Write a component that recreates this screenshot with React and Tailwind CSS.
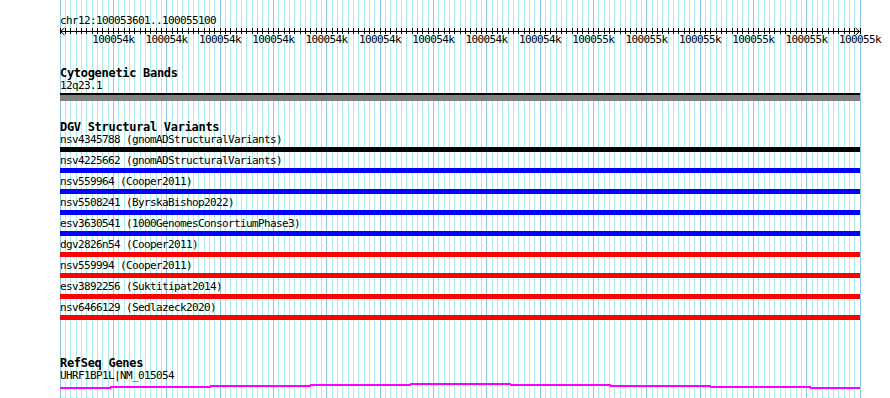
import React from "react";

const MONO = "font-['DejaVu_Sans_Mono',monospace]";

const variants = [
  ["nsv4345788 (gnomADStructuralVariants)", "bg-black"],
  ["nsv4225662 (gnomADStructuralVariants)", "bg-[#0000ff]"],
  ["nsv559964 (Cooper2011)", "bg-[#0000ff]"],
  ["nsv5508241 (ByrskaBishop2022)", "bg-[#0000ff]"],
  ["esv3630541 (1000GenomesConsortiumPhase3)", "bg-[#0000ff]"],
  ["dgv2826n54 (Cooper2011)", "bg-[#ff0000]"],
  ["nsv559994 (Cooper2011)", "bg-[#ff0000]"],
  ["esv3892256 (Suktitipat2014)", "bg-[#ff0000]"],
  ["nsv6466129 (Sedlazeck2020)", "bg-[#ff0000]"],
];

const STEP = 800 / 150;
const ks = Array.from({ length: 151 }, (_, k) => k);

function Grid() {
  return (
    <svg className="absolute left-0 top-0" width="890" height="398">
      {ks.map((k) => {
        const x = Math.round(59.67 + k * STEP) + 0.5;
        const major = k % 10 === 0;
        return (
          <line
            key={k}
            x1={x}
            x2={x}
            y1="0"
            y2="398"
            stroke={major ? "#8ec6ea" : "#afeeee"}
            strokeWidth="1"
          />
        );
      })}
    </svg>
  );
}

function Ruler() {
  return (
    <svg width="802" height="7" className="block overflow-visible">
      <line x1="0" x2="800" y1="4.5" y2="4.5" stroke="#000" strokeWidth="1" />
      {ks.map((k) => {
        const x = Math.round(-0.33 + k * STEP) + 0.5;
        return <line key={k} x1={x} x2={x} y1="1" y2="7" stroke="#000" strokeWidth="1" />;
      })}
      <polyline points="4.5,1 0.5,4.5 4.5,8" fill="none" stroke="#000" strokeWidth="1" />
      <polyline points="795.5,1 799.5,4.5 795.5,8" fill="none" stroke="#000" strokeWidth="1" />
    </svg>
  );
}

function RulerLabels() {
  const labels = ks.filter((k) => k % 10 === 0 && k > 0);
  return (
    <div className="relative h-[12px]">
      {labels.map((k) => {
        const x = -0.33 + k * STEP;
        const txt = k <= 90 ? "100054k" : "100055k";
        return (
          <span
            key={k}
            className="absolute top-0 -translate-x-1/2 text-[11px] leading-[12px] tracking-[-0.62px] text-black whitespace-nowrap"
            style={{ left: x + 0.3 }}
          >
            {txt}
          </span>
        );
      })}
    </div>
  );
}

function GeneLine() {
  const segs = [
    [0, 50, 4],
    [50, 150, 3],
    [150, 250, 2],
    [250, 350, 1],
    [350, 450, 0],
    [450, 550, 1],
    [550, 650, 2],
    [650, 750, 3],
    [750, 800, 4],
  ];
  return (
    <svg width="800" height="8" className="block">
      {segs.map(([a, b, y], i) => (
        <rect key={i} x={a} y={y + 1} width={b - a + 1} height="2" fill="#ff00ff" />
      ))}
    </svg>
  );
}

const small = "text-[11px] leading-[12px] tracking-[-0.62px] text-black whitespace-nowrap";
const heading = "text-[12px] leading-[13px] tracking-[-0.3px] font-bold text-black whitespace-nowrap";

export default function App() {
  return (
    <div className={`relative w-[890px] h-[398px] overflow-hidden bg-white ${MONO}`}>
      <Grid />
      <div className="relative ml-[60px] w-[800px] pt-[15px] flex flex-col">
        <div className={small}>chr12:100053601..100055100</div>
        <Ruler />
        <RulerLabels />

        <div className={`${heading} mt-[21px]`}>Cytogenetic Bands</div>
        <div className={small}>12q23.1</div>
        <div className="mt-[1px] h-[8px] border-t-2 border-black bg-[#808080]" />

        <div className={`${heading} mt-[20px]`}>DGV Structural Variants</div>
        <div className="flex flex-col gap-[3px]">
          {variants.map(([label, color]) => (
            <div key={label} className="flex flex-col">
              <div className={small}>{label}</div>
              <div className={`mt-[1px] h-[5px] ${color}`} />
            </div>
          ))}
        </div>

        <div className={`${heading} mt-[37px]`}>RefSeq Genes</div>
        <div className={small}>UHRF1BP1L|NM_015054</div>
        <GeneLine />
      </div>
    </div>
  );
}
